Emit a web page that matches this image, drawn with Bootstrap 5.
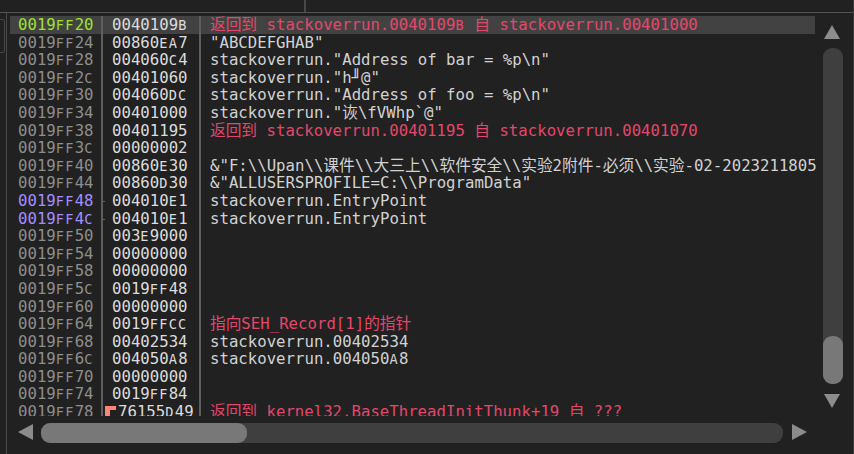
<!DOCTYPE html>
<html lang="zh">
<head>
    <meta charset="UTF-8">
    <meta name="viewport" content="width=device-width, initial-scale=1.0">
    <title>stackoverrun - 堆栈</title>
    <link href="https://cdn.jsdelivr.net/npm/bootstrap@5.3.0/dist/css/bootstrap.min.css" rel="stylesheet">
    <style>
        html, body {
            height: 100%;
            overflow: hidden;
        }

        body {
            background-color: #212121;
            border-right: 1px solid #383838;
            font-family: "DejaVu Sans Mono", "Noto Sans CJK SC", monospace;
            font-size: 15.7px;
            line-height: 18px;
        }

        .top-strip {
            height: 13px;
            flex: none;
            border-bottom: 1px solid #555;
        }

        .top-tab {
            width: 306px;
            border-right: 2px solid #484848;
        }

        .left-gutter {
            width: 7px;
            flex: none;
            padding-top: 6px;
            border-right: 1px solid #4a4a4a;
        }

        .left-box {
            width: 5px;
            height: 34px;
            border: 1px solid #484848;
            border-left: 0;
            border-radius: 0 3px 3px 0;
        }

        .stack-wrap {
            width: 805px;
            flex: none;
            margin-left: 3px;
            padding-top: 3px;
            height: 403px;
            clip-path: inset(0 -6px 0 0);
        }

        .stack-row {
            height: 17.6px;
            white-space: nowrap;
        }

        .stack-row.current {
            background-color: #424242;
        }

        .cell-addr, .cell-val {
            flex: none;
            border-right: 2px solid #5e5e5e;
        }

        .cell-addr {
            width: 93px;
            padding-left: 8px;
            color: #8e8e8e;
        }

        .cell-val {
            width: 98px;
            padding-left: 9px;
            color: #dcdcdc;
        }

        .cell-note {
            padding-left: 9px;
            color: #d2d2d2;
        }

        .is-top { color: #9ee22e; }
        .is-ref { color: #a48dff; }
        .is-red { color: #e2486c; }

        /* hex letters: low capitals on the full monospace width */
        .hex-low {
            font-size: 13.6px;
            letter-spacing: 1.26px;
        }

        .has-ref {
            position: relative;
        }

        .has-ref::before {
            content: "";
            position: absolute;
            left: 0;
            top: 9px;
            width: 2px;
            height: 1px;
            background-color: #3f6fa8;
        }

        .ret-mark {
            display: inline-block;
            width: 11px;
            height: 12px;
            margin: 0 2px 0 -7px;
            vertical-align: -1px;
            background: linear-gradient(#ff8578 0 4px, transparent 4px), linear-gradient(90deg, #ff8578 0 5px, transparent 5px);
        }

        .v-scroll {
            width: 39px;
            flex: none;
            padding: 12px 0 0 8px;
        }

        .track-v {
            width: 20px;
            height: 336px;
            margin: 9px 0 10px;
            background-color: #3f3f3f;
            border-radius: 9px;
        }

        .thumb-v {
            height: 48px;
            background-color: #787878;
            border-radius: 9px;
        }

        .h-scroll {
            padding: 7px 0 0 11px;
        }

        .track-h {
            width: 742px;
            height: 20px;
            margin: 0 9px 0 8px;
            background-color: #3f3f3f;
            border-radius: 9px;
        }

        .thumb-h {
            width: 206px;
            background-color: #787878;
            border-radius: 9px;
        }

        .arrow-icon { fill: #8c8c8c; display: block; }
    </style>
</head>
<body class="d-flex flex-column">

    <div class="top-strip d-flex"><div class="top-tab"></div></div>

    <div class="d-flex flex-grow-1">
        <div class="left-gutter"><div class="left-box"></div></div>
        <div class="flex-grow-1">
            <div class="d-flex">
                <div class="stack-wrap" id="stackRows"></div>
                <div class="v-scroll">
                    <svg class="arrow-icon" width="18" height="14" viewBox="0 0 18 14"><polygon points="9,0 17,14 1,14"/></svg>
                    <div class="track-v d-flex align-items-end"><div class="thumb-v w-100"></div></div>
                    <svg class="arrow-icon" width="18" height="14" viewBox="0 0 18 14"><polygon points="1,0 17,0 9,14"/></svg>
                </div>
            </div>
            <div class="h-scroll d-flex">
                <svg class="arrow-icon" width="15" height="18" viewBox="0 0 15 18"><polygon points="15,1 15,17 0,9"/></svg>
                <div class="track-h d-flex"><div class="thumb-h"></div></div>
                <svg class="arrow-icon" width="15" height="18" viewBox="0 0 15 18"><polygon points="0,1 0,17 15,9"/></svg>
            </div>
        </div>
    </div>

    <script>
        const rows = [
            ['0019FF20', '0040109B', 'r:返回到 stackoverrun.0040109B 自 stackoverrun.00401000', 'is-top'],
            ['0019FF24', '00860EA7', '"ABCDEFGHAB"'],
            ['0019FF28', '004060C4', 'stackoverrun."Address of bar = %p\\n"'],
            ['0019FF2C', '00401060', 'stackoverrun."h╜@"'],
            ['0019FF30', '004060DC', 'stackoverrun."Address of foo = %p\\n"'],
            ['0019FF34', '00401000', 'stackoverrun."诙\\fVWhp`@"'],
            ['0019FF38', '00401195', 'r:返回到 stackoverrun.00401195 自 stackoverrun.00401070'],
            ['0019FF3C', '00000002', ''],
            ['0019FF40', '00860E30', '&"F:\\\\Upan\\\\课件\\\\大三上\\\\软件安全\\\\实验2附件-必须\\\\实验-02-2023211805'],
            ['0019FF44', '00860D30', '&"ALLUSERSPROFILE=C:\\\\ProgramData"'],
            ['0019FF48', '004010E1', 'stackoverrun.EntryPoint', 'is-ref'],
            ['0019FF4C', '004010E1', 'stackoverrun.EntryPoint', 'is-ref'],
            ['0019FF50', '003E9000', ''],
            ['0019FF54', '00000000', ''],
            ['0019FF58', '00000000', ''],
            ['0019FF5C', '0019FF48', ''],
            ['0019FF60', '00000000', ''],
            ['0019FF64', '0019FFCC', 'r:指向SEH_Record[1]的指针'],
            ['0019FF68', '00402534', 'stackoverrun.00402534'],
            ['0019FF6C', '004050A8', 'stackoverrun.004050A8'],
            ['0019FF70', '00000000', ''],
            ['0019FF74', '0019FF84', ''],
            ['0019FF78', '76155D49', 'r:返回到 kernel32.BaseThreadInitThunk+19 自 ???', '', true],
        ];

        // hex letters are drawn low, like the debugger's font
        function hex(text) {
            return text.replace(/\b[0-9A-F]{8}\b/g, m => m.replace(/[A-F]+/g, l => `<span class="hex-low">${l}</span>`));
        }

        document.getElementById('stackRows').innerHTML = rows.map(([addr, val, note, cls, mark], i) => {
            const red = note.startsWith('r:');
            const text = red ? note.slice(2) : note;
            return `<div class="stack-row d-flex${i === 0 ? ' current' : ''}">
                <div class="cell-addr ${cls || ''}">${hex(addr)}</div>
                <div class="cell-val${cls === 'is-ref' ? ' has-ref' : ''}">${mark ? '<span class="ret-mark"></span>' : ''}${hex(val)}</div>
                <div class="cell-note ${red ? 'is-red' : ''}">${hex(text)}</div>
            </div>`;
        }).join('');
    </script>
    <script src="https://cdn.jsdelivr.net/npm/bootstrap@5.3.0/dist/js/bootstrap.bundle.min.js"></script>
</body>
</html>
